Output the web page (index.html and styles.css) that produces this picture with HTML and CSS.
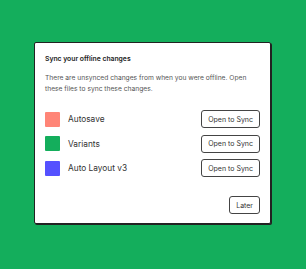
FILE: index.html
```html
<!DOCTYPE html>
<html lang="en">
<head>
    <meta charset="UTF-8">
    <title>Sync your offline changes</title>
    <link rel="stylesheet" href="styles.css">
</head>
<body>
    <div class="dialog">
        <h1>Sync your offline changes</h1>
        <p class="intro">There are unsynced changes from when you were offline. Open these files to sync these changes.</p>
        <div class="files">
            <div class="file">
                <span class="swatch red"></span>
                <span class="name">Autosave</span>
                <button>Open to Sync</button>
            </div>
            <div class="file">
                <span class="swatch green"></span>
                <span class="name">Variants</span>
                <button>Open to Sync</button>
            </div>
            <div class="file">
                <span class="swatch blue"></span>
                <span class="name">Auto Layout v3</span>
                <button>Open to Sync</button>
            </div>
        </div>
        <div class="footer">
            <button>Later</button>
        </div>
    </div>
</body>
</html>
```

FILE: styles.css
```css
body {
    margin: 0;
    width: 306px;
    height: 269px;
    background-color: #14ae5c;
    font-family: Inter, "Noto Sans", sans-serif;
    color: #333;
    display: flex;
    align-items: flex-start;
    justify-content: flex-start;
    padding: 42px 0 0 34px;
    box-sizing: border-box;
}

.dialog {
    width: 237px;
    height: 182px;
    box-sizing: border-box;
    background-color: #ffffff;
    border: 1px solid #222;
    border-radius: 2px;
    box-shadow: 1px 1px 0 #222;
    padding: 11px 10px 9px 10px;
    display: flex;
    flex-direction: column;
}

h1 {
    font-size: 6.8px;
    font-weight: 600;
    margin: 0;
    color: #222;
    line-height: 10px;
}

.intro {
    font-size: 6.7px;
    line-height: 11px;
    margin: 9px 0 0 0;
    color: #555;
}

.files {
    display: flex;
    flex-direction: column;
    gap: 6.5px;
    margin-top: 15px;
}

.file {
    display: flex;
    align-items: center;
}

.swatch {
    width: 15px;
    height: 15px;
    border-radius: 1px;
    margin-right: 8px;
}

.red { background-color: #ff8577; }
.green { background-color: #14ae5c; }
.blue { background-color: #5551ff; }

.name {
    flex: 1;
    font-size: 8.3px;
    color: #333;
}

button {
    font-family: Inter, "Noto Sans", sans-serif;
    font-size: 7px;
    color: #333;
    background-color: #fff;
    border: 1px solid #444;
    border-radius: 3px;
    height: 18px;
    padding: 0 6px;
    cursor: pointer;
}

.footer {
    margin-top: auto;
    display: flex;
    justify-content: flex-end;
}
```
